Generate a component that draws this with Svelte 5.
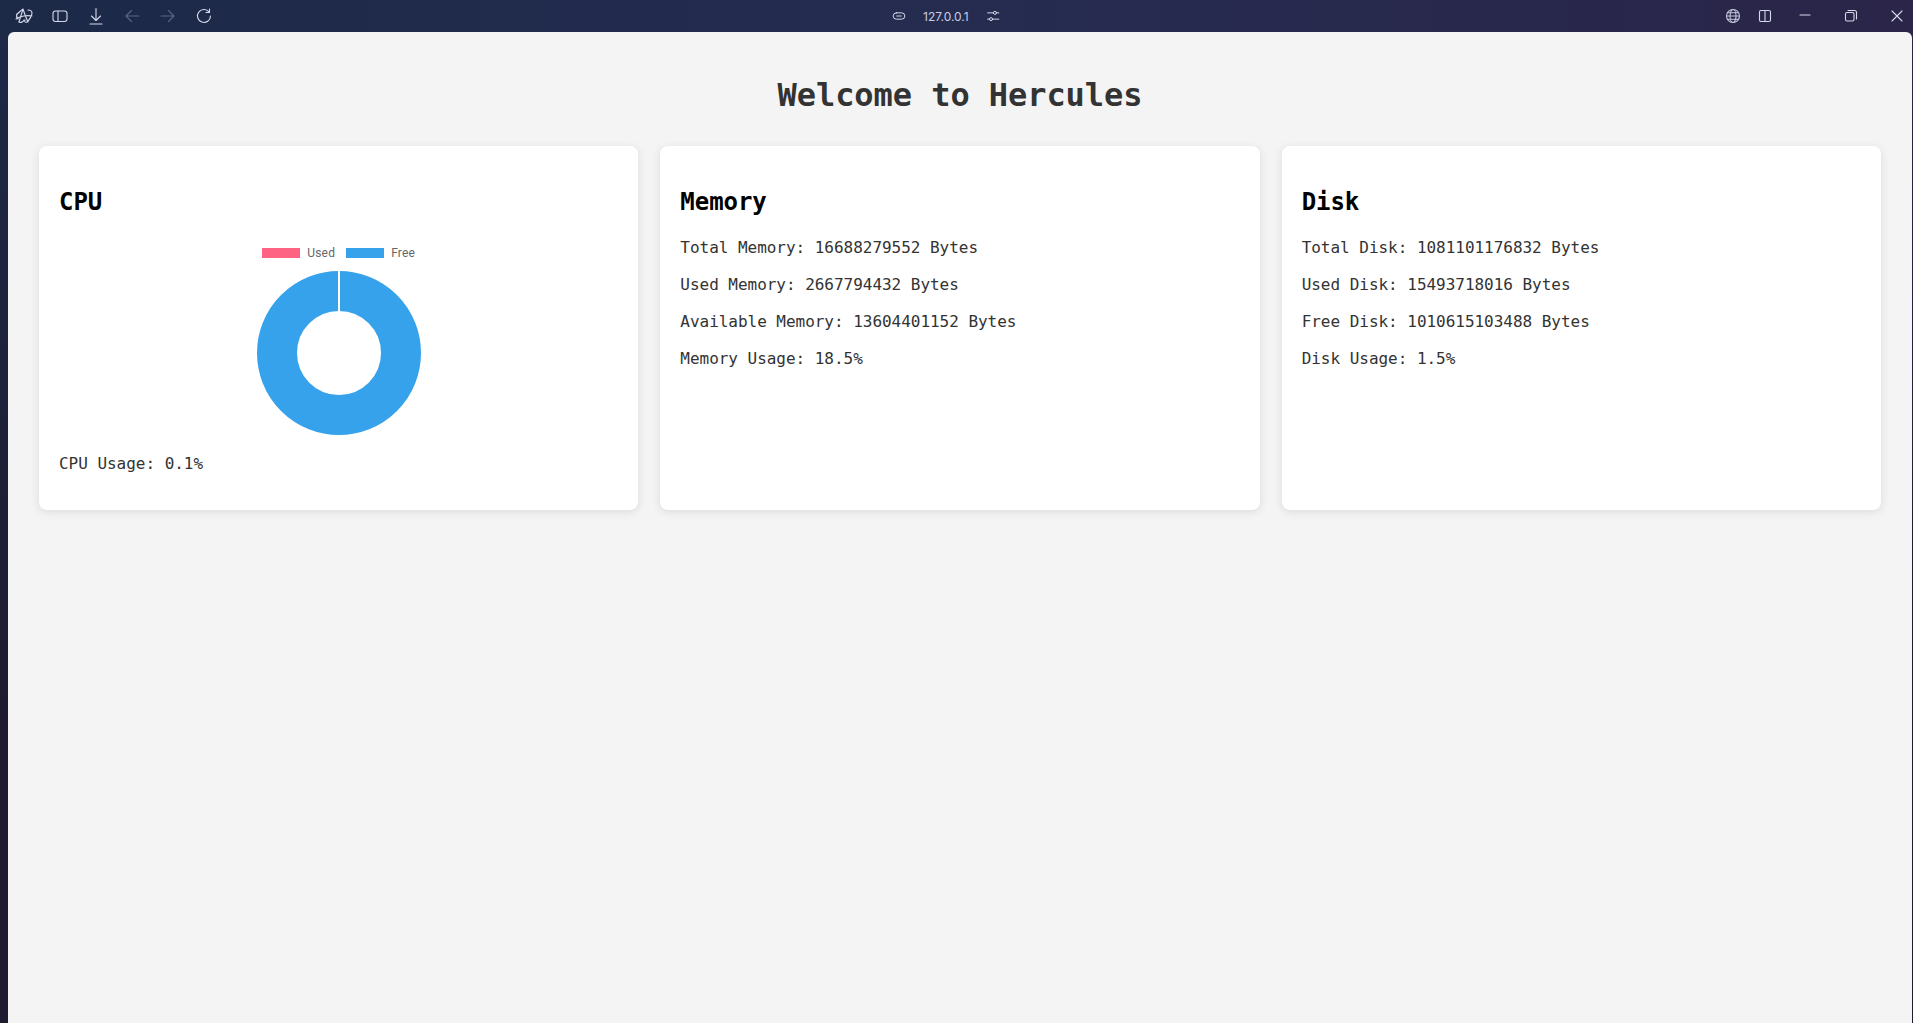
<script>
    const memory = [
        'Total Memory: 16688279552 Bytes',
        'Used Memory: 2667794432 Bytes',
        'Available Memory: 13604401152 Bytes',
        'Memory Usage: 18.5%'
    ];
    const disk = [
        'Total Disk: 1081101176832 Bytes',
        'Used Disk: 15493718016 Bytes',
        'Free Disk: 1010615103488 Bytes',
        'Disk Usage: 1.5%'
    ];
</script>

<div class="frame">
    <header class="toolbar">
        <div class="tools">
            <svg viewBox="0 0 20 20" class="icon">
                <path d="M3 8c2-1 4-4 6-5 1 3 3 9 5 13M9 3c-1 4-3 9-4 13M2 13c4-3 11-4 16-3M14 4c2 0 4 1 4 3s-3 8-5 9c-2 1-3-1-2-2" />
                <path d="M3 8c-1 2 0 4 1 5M5 16c2 1 4 0 5-2" />
            </svg>
            <svg viewBox="0 0 20 20" class="icon">
                <rect x="3" y="5" width="14" height="10.5" rx="2.5" />
                <path d="M8 5v10.5" />
            </svg>
            <svg viewBox="0 0 20 20" class="icon">
                <path d="M10 2.5v12M5.5 10l4.500 4.500 4.500-4.500M4 18h12" />
            </svg>
            <svg viewBox="0 0 20 20" class="icon dim">
                <path d="M17 10H4M9.500 4.500 4 10l5.500 5.500" />
            </svg>
            <svg viewBox="0 0 20 20" class="icon dim">
                <path d="M3 10h13M10.500 4.500 16 10l-5.500 5.500" />
            </svg>
            <svg viewBox="0 0 20 20" class="icon">
                <path d="M15.500 6.500a6.500 6.500 0 1 0 1 3.500M15.500 3v3.500H12" />
            </svg>
        </div>
        <div class="address">
            <svg viewBox="0 0 20 20" class="icon small">
                <rect x="3.500" y="6.500" width="13" height="7" rx="3.500" />
                <path d="M7.500 10h5" />
            </svg>
            <span>127.0.0.1</span>
            <svg viewBox="0 0 20 20" class="icon small">
                <path d="M4 6.500h6.500M14 6.500h2.500M4 13.500h2M9.500 13.500h7" />
                <circle cx="12.200" cy="6.500" r="1.700" />
                <circle cx="7.800" cy="13.500" r="1.700" />
            </svg>
        </div>
        <div class="controls">
            <svg viewBox="0 0 20 20" class="icon globe">
                <circle cx="10" cy="10" r="6.500" />
                <ellipse cx="10" cy="10" rx="3" ry="6.500" />
                <path d="M3.500 10h13M4.500 6.700h11M4.500 13.300h11" />
            </svg>
            <svg viewBox="0 0 20 20" class="icon split">
                <rect x="4.500" y="4.500" width="11" height="11" rx="1.500" />
                <path d="M10 4.500v11" />
            </svg>
            <svg viewBox="0 0 20 20" class="icon minimize">
                <path d="M5 9h10" />
            </svg>
            <svg viewBox="0 0 20 20" class="icon restore">
                <rect x="4.500" y="6.500" width="8.500" height="8.500" rx="1.500" />
                <path d="M7 4.500h6.500a2 2 0 0 1 2 2V13" />
            </svg>
            <svg viewBox="0 0 20 20" class="icon close">
                <path d="M5 5l10 10M15 5 5 15" />
            </svg>
        </div>
    </header>

    <main class="page">
        <h1>Welcome to Hercules</h1>
        <div class="grid">
            <section class="card">
                <h2>CPU</h2>
                <div class="chart">
                    <div class="legend">
                        <span class="swatch used"></span><span class="label">Used</span>
                        <span class="swatch free"></span><span class="label">Free</span>
                    </div>
                    <svg class="donut" viewBox="0 0 164 164" width="164" height="164">
                        <circle cx="82" cy="82" r="62" fill="none" stroke="#36a2eb" stroke-width="40" />
                        <path d="M82 0v40" stroke="#fff" stroke-width="2" />
                    </svg>
                </div>
                <p>CPU Usage: 0.1%</p>
            </section>
            <section class="card">
                <h2>Memory</h2>
                {#each memory as line}
                    <p>{line}</p>
                {/each}
            </section>
            <section class="card">
                <h2>Disk</h2>
                {#each disk as line}
                    <p>{line}</p>
                {/each}
            </section>
        </div>
    </main>
</div>

<style>
    :global(body) {
        margin: 0;
        overflow: hidden;
    }

    .frame {
        height: 1023px;
        display: flex;
        flex-direction: column;
        background:
            linear-gradient(180deg, rgba(31, 26, 48, 0) 32px, #1f1a30 70%),
            linear-gradient(90deg, #1c2947 0%, #252c50 50%, #2a2549 100%);
        font-family: "DejaVu Sans Mono", "Liberation Mono", monospace;
    }

    .toolbar {
        height: 32px;
        flex: none;
        display: grid;
        grid-template-columns: 890px auto 1fr;
        align-items: center;
    }

    .tools {
        display: flex;
        gap: 16px;
        padding-left: 14px;
    }

    .address {
        display: flex;
        align-items: center;
        gap: 9px;
        color: #c9cee2;
        font-family: Inter, "Liberation Sans", sans-serif;
        font-size: 12px;
    }

    .address span {
        margin: 0 6px 0 6px;
    }

    .controls {
        display: flex;
        justify-content: flex-end;
        padding-right: 6px;
    }

    .icon {
        width: 20px;
        height: 20px;
        flex: none;
        fill: none;
        stroke: #d5d9ea;
        stroke-width: 1.1;
        stroke-linecap: round;
        stroke-linejoin: round;
    }

    .icon.dim {
        stroke: #5d6682;
    }

    .icon.small {
        width: 18px;
        height: 18px;
    }

    .globe {
        stroke: #c3c7dc;
        margin-right: 12px;
    }

    .split {
        margin-right: 20px;
    }

    .minimize {
        margin-right: 26px;
    }

    .restore {
        margin-right: 26px;
    }

    .page {
        flex: 1;
        margin: 0 1px 0 8px;
        padding: 0 31px;
        background: #f4f4f4;
        border-radius: 6px 6px 0 0;
        color: #333;
    }

    h1 {
        margin: 0;
        padding: 42px 0 30px;
        font-size: 32px;
        line-height: 42px;
        font-weight: 700;
        letter-spacing: -0.06px;
        text-align: center;
    }

    .grid {
        display: grid;
        grid-template-columns: repeat(3, 1fr);
        gap: 22px;
    }

    .card {
        height: 364px;
        box-sizing: border-box;
        padding: 20px;
        background: #fff;
        border-radius: 8px;
        box-shadow: 0 2px 10px rgba(0, 0, 0, 0.1);
    }

    h2 {
        margin: 20px 0 19px;
        font-size: 24px;
        line-height: 32px;
        font-weight: 700;
        letter-spacing: -0.05px;
        color: #000;
    }

    p {
        margin: 0 0 16px;
        font-size: 16px;
        line-height: 21px;
        letter-spacing: -0.03px;
        color: #333;
    }

    .chart {
        height: 200px;
        margin-bottom: 16px;
        display: flex;
        flex-direction: column;
        align-items: center;
    }

    .legend {
        display: flex;
        align-items: center;
        height: 32px;
        margin-bottom: 2px;
        font-family: Roboto, "Liberation Sans", sans-serif;
        font-size: 12px;
        letter-spacing: 0.2px;
        color: #666;
    }

    .swatch {
        width: 38px;
        height: 10px;
    }

    .used {
        background: #ff6384;
    }

    .free {
        background: #36a2eb;
    }

    .label {
        margin: 0 11px 0 7px;
    }

    .label:last-child {
        margin-right: 0;
    }

    .donut {
        display: block;
    }
</style>
